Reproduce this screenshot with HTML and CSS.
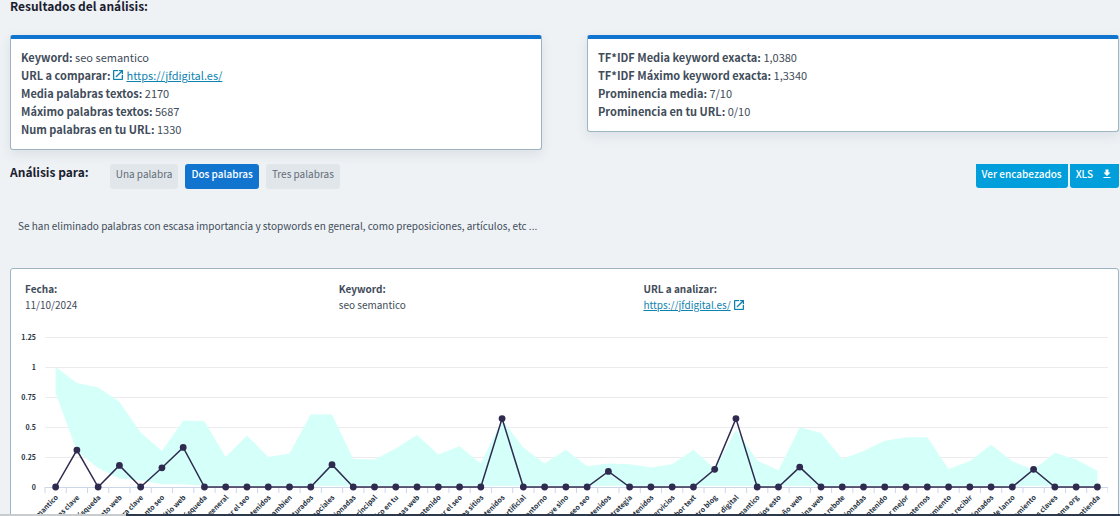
FILE: index.html
```html
<!DOCTYPE html>
<html lang="es">
<head>
<meta charset="utf-8">
<meta name="viewport" content="width=device-width, initial-scale=1">
<title>Resultados del análisis</title>
<link rel="stylesheet" href="styles.css">
</head>
<body>
<svg class="sprite" aria-hidden="true">
  <symbol id="external" viewBox="0 0 18 18">
    <path d="M16 16H2V2h7V0H2C.9 0 0 .9 0 2v14c0 1.100.9 2 2 2h14c1.100 0 2-.9 2-2V9h-2v7zM11 0v2h3.600l-9.800 9.800 1.400 1.400L16 3.400V7h2V0h-7z" fill="currentColor" stroke="currentColor" stroke-width=".5"/>
  </symbol>
  <symbol id="download" viewBox="0 0 24 24">
    <path d="M19 9h-4V3H9v6H5l7 7 7-7zM5 18v2h14v-2H5z" fill="currentColor"/>
  </symbol>
</svg>
<main class="page">
  <h1 class="title">Resultados del análisis:</h1>
  <section class="summary">
    <div class="card card-accent">
      <p><b>Keyword:</b> seo semantico</p>
      <p class="with-icon"><b>URL a comparar:</b> <svg class="icon"><use href="#external"/></svg> <a href="https://jfdigital.es/">https://jfdigital.es/</a></p>
      <p><b>Media palabras textos:</b> 2170</p>
      <p><b>Máximo palabras textos:</b> 5687</p>
      <p><b>Num palabras en tu URL:</b> 1330</p>
    </div>
    <div class="card card-accent">
      <p><b>TF*IDF Media keyword exacta:</b> 1,0380</p>
      <p><b>TF*IDF Máximo keyword exacta:</b> 1,3340</p>
      <p><b>Prominencia media:</b> 7/10</p>
      <p><b>Prominencia en tu URL:</b> 0/10</p>
    </div>
  </section>
  <section class="toolbar">
    <h2 class="title">Análisis para:</h2>
    <div class="tabs">
      <button class="tab" type="button">Una palabra</button>
      <button class="tab tab-active" type="button">Dos palabras</button>
      <button class="tab" type="button">Tres palabras</button>
    </div>
    <div class="actions">
      <button class="action" type="button">Ver encabezados</button>
      <button class="action" type="button">XLS <svg class="icon-download"><use href="#download"/></svg></button>
    </div>
  </section>
  <p class="note">Se han eliminado palabras con escasa importancia y stopwords en general, como preposiciones, artículos, etc ...</p>
  <section class="card report">
    <div class="facts">
      <p><b>Fecha:</b><span>11/10/2024</span></p>
      <p><b>Keyword:</b><span>seo semantico</span></p>
      <p><b>URL a analizar:</b><span class="with-icon"><a href="https://jfdigital.es/">https://jfdigital.es/</a> <svg class="icon"><use href="#external"/></svg></span></p>
    </div>
    <svg class="chart" id="chart" role="img" aria-label="TF*IDF por término"></svg>
  </section>
</main>
<footer class="strip"></footer>
<script src="chart.js"></script>
</body>
</html>
```
FILE: styles.css
```css
* { box-sizing: border-box; }
body {
  margin: 0;
  height: 100vh;
  display: flex;
  flex-direction: column;
  overflow: hidden;
  background: #eef2f5;
  color: #414c5a;
  font-family: "Noto Sans CJK SC", "Noto Sans", sans-serif;
  font-size: 11px;
  line-height: 18px;
}
p, h1, h2 { margin: 0; }
a { color: #0e83b0; }
button { font: inherit; border: 0; cursor: pointer; }
.sprite { display: none; }
.page { flex: 1; min-height: 0; overflow: hidden; padding: 0 1px 0 10px; }
.title { font-size: 12px; line-height: 18px; font-weight: 700; color: #1b1e30; }
h1.title { margin-top: -3px; }
.summary { display: grid; grid-template-columns: 1fr 1fr; gap: 45px; align-items: start; margin-top: 20px; }
.card { background: #fff; border: 1px solid #9db4c2; border-radius: 3px; }
.card-accent {
  border-top: 4px solid #1175cf;
  padding: 9px 10px 11px;
  box-shadow: 0 4px 12px rgba(50, 70, 90, .1);
}
.icon { width: 10px; height: 10px; color: #0e83b0; flex: none; }
.with-icon { display: flex; align-items: center; gap: 3px; }
.toolbar { display: flex; align-items: flex-start; margin-top: 13px; }
.tabs { display: flex; gap: 7px; margin: 1px 0 0 21px; }
.tab { height: 25px; padding: 0 6px 5px; font-size: 10px; border-radius: 3px; background: #e1e6ea; color: #626c78; }
.tab-active { background: #1175cf; color: #fff; font-weight: 500; }
.actions { display: flex; gap: 2px; margin: 1px 0 0 auto; }
.action {
  display: flex;
  align-items: center;
  gap: 8px;
  height: 24px;
  padding: 0 6px 4px;
  font-size: 10px;
  font-weight: 500;
  color: #fff;
  background: #009eda;
  border-radius: 0 0 3px 3px;
}
.icon-download { width: 12px; height: 12px; }
.note { margin: 28px 0 0 8px; font-size: 10px; }
.report { margin-top: 33px; padding: 12px 10px 0 8px; }
.facts { display: grid; grid-template-columns: 314fr 305fr 465fr; padding-left: 6px; font-size: 10px; line-height: 16px; }
.facts b, .facts span { display: block; }
.facts .with-icon { display: flex; }
.chart { display: block; width: 100%; height: 260px; margin-top: 16px; }
.grid { stroke: #ececef; }
.axis { stroke: #ccd6eb; }
.band { fill: #d5fff9; }
.series { fill: none; stroke: #2f2b50; stroke-width: 1.5; }
.dot { fill: #2f2b50; }
.tick-label { font-size: 7px; font-weight: 700; fill: #26323f; text-anchor: end; }
.strip { height: 2px; flex: none; background: linear-gradient(to right, #c9cccf 126px, #2c394b 126px); }
```
FILE: chart.js
```javascript
const labels = ["seo semantico", "palabras clave", "búsqueda", "posicionamiento web", "palabra clave",
  "posicionamiento seo", "sitio web", "búsqueda", "en general", "mejorar el seo", "contenidos", "tambien",
  "estructurados", "redes sociales", "relacionadas", "principal", "semantico en tu", "paginas web", "contenido",
  "mejorar el seo", "otros sitios", "contenidos", "artificial", "entorno", "clave sino", "seo seo", "contenidos",
  "estrategia", "contenidos", "servicios", "anchor text", "nuestro blog", "ser digital", "semantico", "estudios esto",
  "diseño web", "pagina web", "de rebote", "relacionadas", "contenido", "por mejor", "internos", "posicionamiento",
  "a recibir", "relacionados", "de lanzo", "posicionamiento", "palabras claves", "schema org", "entienda"];
const high = [1, .867, .83, .71, .455, .3, .555, .547, .25, .43, .25, .28, .605, .605, .233, .23, .32, .433, .27, .34,
  .195, .56, .33, .195, .31, .172, .195, .19, .163, .19, .31, .153, .48, .22, .14, .497, .45, .233, .3, .386,
  .414, .414, .15, .214, .353, .214, .144, .286, .23, .136];
const low = labels.map((_, i) => [.783, .3, .158, .07, .055, .022, .022][i] ?? .01);
const found = { 1: .308, 3: .18, 5: .16, 6: .33, 13: .186, 21: .57, 26: .13, 31: .147, 32: .57, 35: .166, 46: .147 };

function draw() {
  const svg = document.getElementById("chart");
  const left = 26, top = 8, scale = 120, base = top + 1.25 * scale;
  const right = svg.clientWidth;
  const step = (right - left) / labels.length;
  const x = i => left + step * (i + .5);
  const y = v => base - v * scale;
  const line = (cls, x1, y1, x2, y2) => `<line class="${cls}" x1="${x1}" y1="${y1}" x2="${x2}" y2="${y2}"/>`;
  let out = "";
  [1.25, 1, .75, .5, .25, 0].forEach(v => {
    const gy = Math.round(y(v)) + .5;
    out += line(v ? "grid" : "axis", left, gy, right, gy);
    out += `<text class="tick-label" x="17" y="${gy + 2}">${v}</text>`;
  });
  for (let i = 0; i <= labels.length; i++) {
    const tx = left + step * i;
    out += line("axis", tx, base, tx, base + 6);
  }
  const upper = high.map((v, i) => `${x(i)},${y(v)}`);
  const lower = low.map((v, i) => `${x(i)},${y(v)}`).reverse();
  out += `<polygon class="band" points="${upper.concat(lower).join(" ")}"/>`;
  const points = labels.map((_, i) => [x(i), y(found[i] || 0)]);
  out += `<polyline class="series" points="${points.join(" ")}"/>`;
  points.forEach(([px, py]) => { out += `<circle class="dot" cx="${px}" cy="${py}" r="3.4"/>`; });
  labels.forEach((t, i) => {
    out += `<text class="tick-label" transform="translate(${x(i) + 3} ${base + 11}) rotate(-45)">${t}</text>`;
  });
  svg.innerHTML = out;
}
draw();
window.addEventListener("resize", draw);
```
